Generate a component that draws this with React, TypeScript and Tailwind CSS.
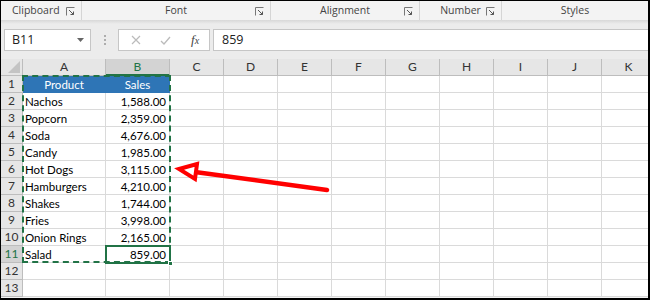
import React from "react";

const products = [
  ["Nachos", "1,588.00"],
  ["Popcorn", "2,359.00"],
  ["Soda", "4,676.00"],
  ["Candy", "1,985.00"],
  ["Hot Dogs", "3,115.00"],
  ["Hamburgers", "4,210.00"],
  ["Shakes", "1,744.00"],
  ["Fries", "3,998.00"],
  ["Onion Rings", "2,165.00"],
  ["Salad", "859.00"],
];

const cols = ["A", "B", "C", "D", "E", "F", "G", "H", "I", "J", "K"];

function Launcher() {
  return (
    <svg width="9" height="9" viewBox="0 0 9 9" className="shrink-0">
      <path d="M0.5 8.5V0.5H8.5" fill="none" stroke="#777" strokeWidth="1" />
      <path d="M3 3L7.5 7.5M7.5 4.5V7.5H4.5" fill="none" stroke="#555" strokeWidth="1" />
    </svg>
  );
}

function Group({ label, width, launcher = true }: { label: string; width: string; launcher?: boolean }) {
  return (
    <div className={`${width} relative flex h-full items-center justify-center border-r border-[#d5d5d5]`}>
      <span>{label}</span>
      {launcher && (
        <span className="absolute right-[6px] top-[6px]">
          <Launcher />
        </span>
      )}
    </div>
  );
}

export default function App() {
  const rows = Array.from({ length: 13 }, (_, i) => i + 1);

  const cellText = (r: number, c: number) => {
    if (r === 1 && c === 0) return "Product";
    if (r === 1 && c === 1) return "Sales";
    if (r >= 2 && r <= 11 && c < 2) return products[r - 2][c];
    return "";
  };

  return (
    <div className="relative h-[300px] w-[650px] overflow-hidden border-b-2 border-r-2 border-l border-t border-black bg-[#f3f3f3] font-['Open_Sans',sans-serif]">
      {/* ribbon group labels */}
      <div className="flex h-[19px] text-[10.5px] text-[#444]">
        <div className="relative flex h-full w-[81px] items-center border-r border-[#d5d5d5] pl-[11px]">
          <span>Clipboard</span>
          <span className="absolute right-[6px] top-[6px]">
            <Launcher />
          </span>
        </div>
        <Group label="Font" width="w-[189px]" />
        <Group label="Alignment" width="w-[149px]" />
        <Group label="Number" width="w-[82px]" />
        <div className="flex h-full flex-1 items-center justify-center">Styles</div>
      </div>
      <div className="h-[4px] bg-gradient-to-b from-[#d8d8d8] to-[#ececec]" />

      {/* formula bar */}
      <div className="flex h-[35px] items-start bg-[#ececec] pt-[5px]">
        <div className="ml-[3px] flex h-[22px] w-[87px] items-center justify-between border border-[#c6c6c6] bg-white pl-[7px] pr-[6px] text-[12.5px] text-[#222]">
          <span>B11</span>
          <svg width="7" height="4" viewBox="0 0 7 4">
            <path d="M0 0H7L3.5 4Z" fill="#666" />
          </svg>
        </div>
        <div className="flex h-[22px] w-[27px] flex-col items-center justify-center gap-[2px]">
          <span className="h-[2px] w-[2px] rounded-full bg-[#999]" />
          <span className="h-[2px] w-[2px] rounded-full bg-[#999]" />
          <span className="h-[2px] w-[2px] rounded-full bg-[#999]" />
        </div>
        <div className="flex h-[22px] w-[92px] items-center border border-[#c6c6c6] bg-white">
          <svg width="10" height="10" viewBox="0 0 10 10" className="ml-[12px]">
            <path d="M1 1L9 9M9 1L1 9" stroke="#bbb" strokeWidth="1.2" />
          </svg>
          <svg width="11" height="9" viewBox="0 0 11 9" className="ml-[19px]">
            <path d="M1 5L4 8L10 1" fill="none" stroke="#bbb" strokeWidth="1.3" />
          </svg>
          <span className="ml-[20px] font-['Liberation_Serif',serif] text-[13px] italic text-[#444]">
            f<span className="text-[10px]">x</span>
          </span>
        </div>
        <div className="ml-[3px] flex h-[22px] flex-1 items-center border border-r-0 border-[#c6c6c6] bg-white pl-[8px] text-[12.5px] text-[#222]">
          859
        </div>
      </div>

      {/* grid */}
      <div className="relative font-['Lato',sans-serif]">
        <div className="grid grid-cols-[22px_83px_64px_repeat(9,54px)] auto-rows-[17px]">
          {/* corner */}
          <div className="relative border-b border-r border-[#bdbdbd] bg-[#e6e6e6]">
            <svg width="12" height="12" viewBox="0 0 12 12" className="absolute bottom-[2px] right-[2px]">
              <path d="M12 0V12H0Z" fill="#c4c4c4" />
            </svg>
          </div>
          {cols.map((c) => (
            <div
              key={c}
              className={`flex items-center justify-center border-r text-[12px] ${
                c === "B"
                  ? "border-b-2 border-b-[#217346] border-r-[#bdbdbd] bg-[#d3d3d3] text-[#217346]"
                  : "border-b border-[#bdbdbd] bg-[#e6e6e6] text-[#333]"
              }`}
            >
              {c}
            </div>
          ))}
          {rows.map((r) => (
            <React.Fragment key={r}>
              <div
                className={`flex items-center justify-center border-b border-r border-[#bdbdbd] text-[12px] ${
                  r === 11 ? "bg-[#d3d3d3] text-[#217346]" : "bg-[#e6e6e6] text-[#333]"
                }`}
              >
                {r}
              </div>
              {cols.map((c, ci) => {
                const t = cellText(r, ci);
                const header = r === 1 && ci < 2;
                return (
                  <div
                    key={c}
                    className={`flex items-center overflow-hidden whitespace-nowrap border-b border-r pt-[2px] text-[11.5px] leading-none ${
                      header
                        ? "justify-center border-[#2e75b6] bg-[#2e75b6] text-white"
                        : `border-[#dadada] bg-white text-black ${ci === 1 ? "justify-end pr-[3px]" : "pl-[2px]"}`
                    }`}
                  >
                    {t}
                  </div>
                );
              })}
            </React.Fragment>
          ))}
        </div>

        {/* copy marquee */}
        <div className="pointer-events-none absolute left-[21px] top-[16px] h-[188px] w-[149px] border-2 border-dashed border-[#217346]" />
        {/* active cell */}
        <div className="pointer-events-none absolute left-[104px] top-[186px] h-[19px] w-[66px] border-2 border-[#217346]">
          <span className="absolute -bottom-[4px] -right-[4px] h-[5px] w-[5px] border border-white bg-[#217346]" />
        </div>
      </div>

      {/* red arrow */}
      <svg className="pointer-events-none absolute left-0 top-0" width="650" height="300">
        <line x1="326" y1="189" x2="194" y2="171" stroke="#ff0000" strokeWidth="4.5" strokeLinecap="round" />
        <path d="M178 168L196 163L194 178Z" fill="white" stroke="#ff0000" strokeWidth="4" strokeLinejoin="miter" />
      </svg>
    </div>
  );
}
